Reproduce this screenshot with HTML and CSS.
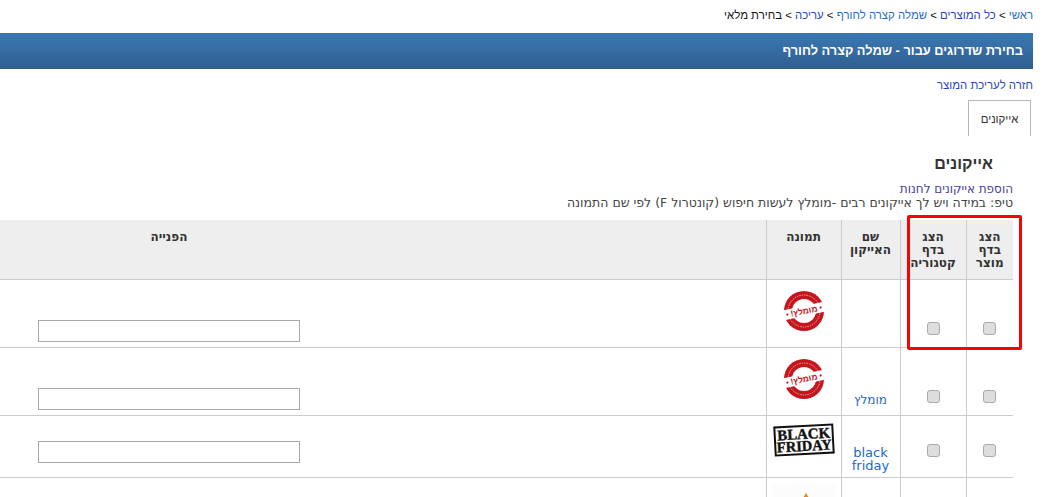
FILE: index.html
```html
<!doctype html>
<html dir="rtl" lang="he">
<head>
    <meta charset="utf-8">
    <title>בחירת שדרוגים</title>
    <link rel="stylesheet" href="styles.css">
</head>
<body>
<!--Breadcrumbs-->
<div class="crumbs">
    <a href="#">ראשי</a> &gt; <a href="#" class="seen">כל המוצרים</a> &gt; <a href="#">שמלה קצרה לחורף</a> &gt; <a href="#" class="seen">עריכה</a> &gt; בחירת מלאי
</div>

<div class="titleBar">בחירת שדרוגים עבור - שמלה קצרה לחורף</div>

<div class="backLink"><a href="#" class="seen">חזרה לעריכת המוצר</a></div>

<div class="tabs">
    <div class="tab">אייקונים</div>
</div>

<!--Icons section-->
<div class="section">
    <h2>אייקונים</h2>
    <div class="intro">
        <a href="#" class="added">הוספת אייקונים לחנות</a><br>
        טיפ: במידה ויש לך אייקונים רבים -מומלץ לעשות חיפוש (קונטרול F) לפי שם התמונה
    </div>

    <div class="tableWrap">
        <table class="icons">
            <tr>
                <th class="colCheck">הצג<br>בדף<br>מוצר</th>
                <th class="colCheck2">הצג<br>בדף<br>קטגוריה</th>
                <th class="colName">שם<br>האייקון</th>
                <th class="colPic">תמונה</th>
                <th class="colGap"></th>
                <th class="colText">הפנייה</th>
            </tr>
            <tr class="row1">
                <td class="check"><input type="checkbox"></td>
                <td class="check"><input type="checkbox"></td>
                <td class="name"></td>
                <td class="pic">
                    <svg width="44" height="44" viewBox="0 0 44 44">
                        <circle cx="22" cy="22" r="20" fill="#c4161c"/>
                        <circle cx="22" cy="22" r="12" fill="#fff"/>
                        <circle cx="22" cy="22" r="16" fill="none" stroke="#e9a0a2" stroke-width="1" stroke-dasharray="1.5 1"/>
                        <g transform="rotate(-12 22 22)">
                            <rect x="1" y="17" width="42" height="10" fill="#fff"/>
                            <circle cx="5" cy="22" r="1.1" fill="#c4161c"/>
                            <circle cx="39" cy="22" r="1.1" fill="#c4161c"/>
                            <text x="22" y="25" class="stampText">מומלץ!</text>
                        </g>
                    </svg>
                </td>
                <td class="gap"></td>
                <td class="text"><input type="text"></td>
            </tr>
            <tr class="row2">
                <td class="check"><input type="checkbox"></td>
                <td class="check"><input type="checkbox"></td>
                <td class="name"><a href="#">מומלץ</a></td>
                <td class="pic">
                    <svg width="44" height="44" viewBox="0 0 44 44">
                        <circle cx="22" cy="22" r="20" fill="#c4161c"/>
                        <circle cx="22" cy="22" r="12" fill="#fff"/>
                        <circle cx="22" cy="22" r="16" fill="none" stroke="#e9a0a2" stroke-width="1" stroke-dasharray="1.5 1"/>
                        <g transform="rotate(-12 22 22)">
                            <rect x="1" y="17" width="42" height="10" fill="#fff"/>
                            <circle cx="5" cy="22" r="1.1" fill="#c4161c"/>
                            <circle cx="39" cy="22" r="1.1" fill="#c4161c"/>
                            <text x="22" y="25" class="stampText">מומלץ!</text>
                        </g>
                    </svg>
                </td>
                <td class="gap"></td>
                <td class="text"><input type="text"></td>
            </tr>
            <tr class="row3">
                <td class="check"><input type="checkbox"></td>
                <td class="check"><input type="checkbox"></td>
                <td class="name"><a href="#" dir="ltr">black friday</a></td>
                <td class="pic">
                    <svg width="62" height="36" viewBox="0 0 62 36">
                        <g transform="rotate(-3 31 18)">
                            <rect x="2" y="4" width="58" height="28" fill="#fff" stroke="#111" stroke-width="2"/>
                            <text x="31" y="17" class="bfText" textLength="53" lengthAdjust="spacingAndGlyphs">BLACK</text>
                            <text x="31" y="29" class="bfText" textLength="55" lengthAdjust="spacingAndGlyphs">FRIDAY</text>
                        </g>
                    </svg>
                </td>
                <td class="gap"></td>
                <td class="text"><input type="text"></td>
            </tr>
            <tr class="row4">
                <td class="check"></td>
                <td class="check"></td>
                <td class="name"></td>
                <td class="pic">
                    <svg width="64" height="20" viewBox="0 0 64 20">
                        <rect width="64" height="20" fill="#fcfcfc"/>
                        <path d="M31 14l3-5 3 5z" fill="#e8862a"/>
                    </svg>
                </td>
                <td class="gap"></td>
                <td class="text"></td>
            </tr>
        </table>
        <!--Red mark over the two checkbox columns-->
        <div class="redMark"></div>
    </div>
</div>
</body>
</html>
```

FILE: styles.css
```css
html{overflow:hidden;}
body{margin:0; background:#fff; color:#333; font-family:"Liberation Sans", sans-serif; font-size:11.4px; height:497px; overflow:hidden;}
a{color:#1f6fc0; text-decoration:none;}
a.seen{color:#2b45b5;}

/*Top of the page*/
.crumbs{margin:0 14px 0 0; padding-top:8px; height:33px; box-sizing:border-box; color:#111; line-height:15px;}
.titleBar{margin-right:14px; height:36px; line-height:36px; padding-right:10px; color:#fff; font-weight:bold; font-size:12.8px; background:linear-gradient(#3b78b3, #2f5f90);}
.backLink{margin-right:14px; height:31px; line-height:32px;}

/*Tab*/
.tabs{margin-right:16px; height:36px;}
.tab{display:inline-block; box-sizing:border-box; width:63px; height:36px; line-height:36px; text-align:center; border:1px solid #b5b5b5; border-bottom:0; color:#333;}

/*Icons section*/
.section{padding-top:18px;}
h2{margin:0 54px 0 0; font-size:16px; line-height:20px; color:#333;}
.intro{margin:8px 34px 0 0; line-height:13px; height:27px; white-space:nowrap; font-family:"DejaVu Sans", sans-serif; font-size:12.5px; color:#444;}
.intro .added{color:#4a3f96; font-size:12px;}
.tableWrap{position:relative; margin-top:11px;}

.icons{border-collapse:collapse; table-layout:fixed; width:1013px; margin:0 34px 0 0; font-family:"DejaVu Sans", sans-serif; font-size:12px;}
.icons th{background:#eee; height:59px; vertical-align:top; padding:11px 0 0; box-sizing:border-box; line-height:13px; font-weight:bold; border-bottom:1px solid #ccc; border-left:1px solid #ccc;}
.icons td{border-bottom:1px solid #ccc; padding:0; text-align:center; box-sizing:border-box;}
.colCheck{width:47px;}
.colCheck2{width:66px;}
.colName{width:59px;}
.colPic{width:75px;}
.colGap{width:428px;}
.icons th.colGap{border-left:0;}
.icons th.colText{border-left:0;}
.check, .name, .pic{border-left:1px solid #ccc;}

.row1 td{height:68px;}
.row2 td{height:68px;}
.row3 td{height:62px;}
.row4 td{height:40px; border-bottom:0;}
.check{vertical-align:bottom;}
.icons .row1 .check, .icons .row2 .check{padding-bottom:12px;}
.icons .row3 .check{padding-bottom:20px;}
.icons td.name{vertical-align:bottom; padding-bottom:8px; font-size:13px; line-height:13px;}
.icons .row3 td.name{padding-bottom:5px;}
.name a{color:#2468cc;}
.row2 .name a{font-size:12px;}
.pic{vertical-align:top;}
.row1 .pic svg, .row2 .pic svg{margin-top:9px;}
.row3 .pic svg{margin-top:6px;}
.row4 .pic svg{margin-top:6px;}
.text{vertical-align:bottom;}
.row1 .text input, .row2 .text input{margin-bottom:5px;}
.row3 .text input{margin-bottom:14px;}

input[type=checkbox]{appearance:none; -webkit-appearance:none; display:block; margin:0 auto; width:13px; height:13px; background:#ddd; border:1px solid #aaa; border-radius:3px;}
input[type=text]{display:block; margin:0 auto; box-sizing:border-box; width:262px; height:22px; border:1px solid #a9a9a9; background:#fff;}

.redMark{position:absolute; top:-5px; left:907px; width:115px; height:135px; box-sizing:border-box; border:3px solid #f00; border-radius:2px;}

/*Pictures*/
.stampText{font-size:8.5px; font-family:"Liberation Sans", sans-serif; fill:#c4161c; text-anchor:middle; font-weight:bold;}
.bfText{font-size:15px; font-family:"Liberation Serif", serif; font-weight:bold; text-anchor:middle; fill:#111; stroke:#111; stroke-width:.4;}
```
